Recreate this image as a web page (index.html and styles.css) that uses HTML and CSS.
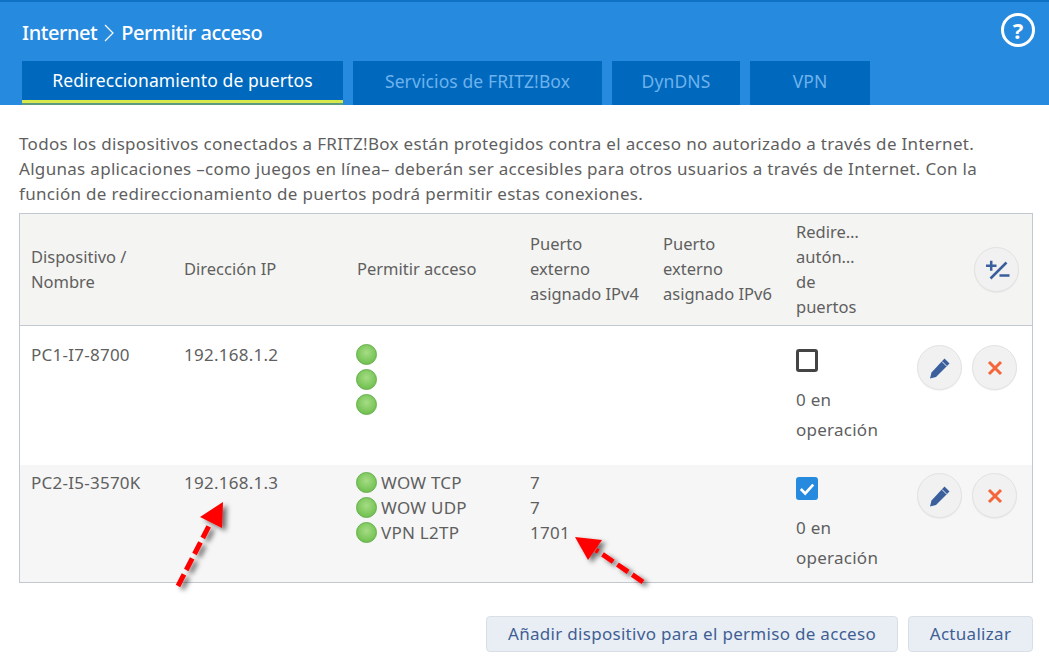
FILE: index.html
```html
<!DOCTYPE html>
<html lang="es">
<head>
<meta charset="utf-8">
<title>Permitir acceso</title>
<link rel="stylesheet" href="styles.css">
</head>
<body>
<header class="top">
  <div class="title-row">
    <h1 class="title">Internet
      <svg class="crumb" width="10" height="18" viewBox="0 0 10 18"><path d="M1 1l8 8-8 8" fill="none" stroke="#fff" stroke-width="1.2"/></svg>
      Permitir acceso</h1>
    <span class="help">?</span>
  </div>
  <nav class="tabs">
    <a class="tab tab-ports active">Redireccionamiento de puertos</a>
    <a class="tab tab-services">Servicios de FRITZ!Box</a>
    <a class="tab tab-dyn">DynDNS</a>
    <a class="tab tab-vpn">VPN</a>
  </nav>
</header>
<main class="content">
  <p class="intro">Todos los dispositivos conectados a FRITZ!Box están protegidos contra el acceso no autorizado a través de Internet.<br>Algunas aplicaciones –como juegos en línea– deberán ser accesibles para otros usuarios a través de Internet. Con la<br>función de redireccionamiento de puertos podrá permitir estas conexiones.</p>
  <section class="table">
    <div class="row head">
      <div>Dispositivo /<br>Nombre</div>
      <div>Dirección IP</div>
      <div>Permitir acceso</div>
      <div>Puerto<br>externo<br>asignado IPv4</div>
      <div>Puerto<br>externo<br>asignado IPv6</div>
      <div>Redire…<br>autón…<br>de<br>puertos</div>
      <div class="actions head-actions">
        <button class="round"><svg width="26" height="22" viewBox="0 0 26 22"><path d="M2 6.800h10.500M7.200 1.800v10M6.500 19.500L22.500 3.500M15.500 16.500h10" fill="none" stroke="#3a5f9c" stroke-width="2.500"/></svg></button>
      </div>
    </div>
    <div class="row body first">
      <div>PC1-I7-8700</div>
      <div>192.168.1.2</div>
      <div class="leds">
        <div class="led-line"><i class="led"></i></div>
        <div class="led-line"><i class="led"></i></div>
        <div class="led-line"><i class="led"></i></div>
      </div>
      <div></div>
      <div></div>
      <div class="auto"><span class="check"></span><div class="state">0 en<br>operación</div></div>
      <div class="actions">
        <button class="round"><svg width="22" height="22" viewBox="0 0 22 22"><path d="M15.500 1.500l5 5L7 20l-6 1.500L2.500 15.500z" fill="#3a5f9c"/><path d="M13 4.500l4.500 4.500" stroke="#f0f0f0" stroke-width="1"/></svg></button>
        <button class="round"><svg width="16" height="16" viewBox="0 0 16 16"><path d="M2 2l12 12M14 2L2 14" stroke="#f4663a" stroke-width="3"/></svg></button>
      </div>
    </div>
    <div class="row body second">
      <div>PC2-I5-3570K</div>
      <div>192.168.1.3</div>
      <div class="leds">
        <div class="led-line"><i class="led"></i>WOW TCP</div>
        <div class="led-line"><i class="led"></i>WOW UDP</div>
        <div class="led-line"><i class="led"></i>VPN L2TP</div>
      </div>
      <div>7<br>7<br>1701</div>
      <div></div>
      <div class="auto"><span class="check on"><svg width="18" height="14" viewBox="0 0 18 14"><path d="M2 7l5 5 9-10" fill="none" stroke="#fff" stroke-width="3"/></svg></span><div class="state">0 en<br>operación</div></div>
      <div class="actions">
        <button class="round"><svg width="22" height="22" viewBox="0 0 22 22"><path d="M15.500 1.500l5 5L7 20l-6 1.500L2.500 15.500z" fill="#3a5f9c"/><path d="M13 4.500l4.500 4.500" stroke="#f0f0f0" stroke-width="1"/></svg></button>
        <button class="round"><svg width="16" height="16" viewBox="0 0 16 16"><path d="M2 2l12 12M14 2L2 14" stroke="#f4663a" stroke-width="3"/></svg></button>
      </div>
    </div>
  </section>
  <div class="buttons">
    <button class="btn btn-add">Añadir dispositivo para el permiso de acceso</button>
    <button class="btn btn-update">Actualizar</button>
  </div>
</main>
<svg class="arrows" width="1049" height="669" viewBox="0 0 1049 669">
  <defs><filter id="sh" x="-30%" y="-30%" width="160%" height="160%"><feDropShadow dx="4" dy="3" stdDeviation="2.500" flood-color="#000" flood-opacity=".55"/></filter></defs>
  <g filter="url(#sh)">
    <path d="M178 586L211 522" stroke="#f00" stroke-width="5" stroke-dasharray="13 5" fill="none"/>
    <path d="M223 502L200 517L222 528z" fill="#f00"/>
  </g>
  <g filter="url(#sh)">
    <path d="M643 582L596 550" stroke="#f00" stroke-width="5" stroke-dasharray="13 5" fill="none"/>
    <path d="M575 537L602 540L588 560z" fill="#f00"/>
  </g>
</svg>
</body>
</html>
```
FILE: styles.css
```css
* { box-sizing: border-box; }
html, body { margin: 0; height: 669px; overflow: hidden; background: #fff; }
body { font-family: "Noto Sans", "Open Sans", sans-serif; font-size: 17px; letter-spacing: .25px; color: #5f5f5f; position: relative; }
.top { height: 105px; background: #268ade; border-top: 2px solid #0f72c4; padding-left: 22px; }
.title-row { height: 59px; display: flex; align-items: center; justify-content: space-between; padding-right: 14px; }
.title { margin: 2px 0 0; font-size: 20px; font-weight: 500; color: #fff; letter-spacing: -.45px; display: flex; align-items: center; gap: 7px; white-space: nowrap; }
.crumb { flex: none; }
.help { width: 34px; height: 34px; border: 3px solid #fff; border-radius: 50%; color: #fff; font-size: 22px; font-weight: 700; letter-spacing: 0; display: flex; align-items: center; justify-content: center; margin-bottom: 3px; }
.tabs { display: flex; gap: 10px; height: 44px; }
.tab { background: #0069be; color: #6db2ec; font-size: 17.500px; letter-spacing: .1px; display: flex; align-items: center; justify-content: center; padding-bottom: 5px; white-space: nowrap; }
.tab-ports { width: 321px; }
.tab-services { width: 249px; }
.tab-dyn { width: 128px; }
.tab-vpn { width: 120px; }
.tab.active { color: #fff; height: 44px; border-bottom: 2px solid #5b9a80; box-shadow: inset 0 -3px 0 #d6e84a; }
.content { padding: 0 16px 0 19px; }
.intro { margin: 0; padding-top: 26px; line-height: 25px; height: 108px; white-space: nowrap; letter-spacing: .31px; }
.table { border: 1px solid #c2c8cf; width: 1014px; }
.row { display: grid; grid-template-columns: 153px 173px 173px 133px 133px 121px 1fr; padding-left: 11px; line-height: 25px; }
.head { height: 112px; padding-bottom: 2px; background: #f4f4f2; border-bottom: 1px solid #c2c8cf; align-items: center; font-size: 16.500px; letter-spacing: 0; }
.body.first { height: 139px; background: #fff; padding-top: 16px; }
.body.second { height: 117px; background: #f6f6f6; padding-top: 5px; }
.actions { display: flex; gap: 10px; padding-top: 3px; }
.head-actions { justify-content: flex-end; padding: 2px 13px 0 0; }
.round { width: 45px; height: 45px; border-radius: 50%; border: 1px solid #e2e2e2; background: #f1f1f1; padding: 0; display: flex; align-items: center; justify-content: center; box-shadow: 0 1px 1px rgba(0,0,0,.05); }
.led-line { display: flex; align-items: center; height: 25px; }
.led { width: 21px; height: 21px; margin: 0 4px 0 -1px; border-radius: 50%; border: 1px solid #62ad45; background: radial-gradient(circle at 50% 40%, #a6dc86 0, #7cc75b 60%, #66b347 100%); flex: none; }
.auto { display: flex; flex-direction: column; }
.check { width: 22px; height: 23px; border: 3px solid #444; border-radius: 3px; background: #fff; display: flex; align-items: center; justify-content: center; margin-top: 7px; }
.check.on { background: #268ade; border-color: #268ade; }
.state { line-height: 30px; margin-top: 13px; }
.buttons { display: flex; gap: 10px; margin-top: 33px; width: 1014px; justify-content: flex-end; }
.btn { height: 36px; border: 1px solid #d9dfe6; border-radius: 4px; background: #e9eef4; color: #3f5f94; font: inherit; letter-spacing: .3px; padding: 0 0 2px; white-space: nowrap; }
.btn-add { width: 412px; }
.btn-update { width: 125px; }
.arrows { position: absolute; left: 0; top: 0; pointer-events: none; }
```
